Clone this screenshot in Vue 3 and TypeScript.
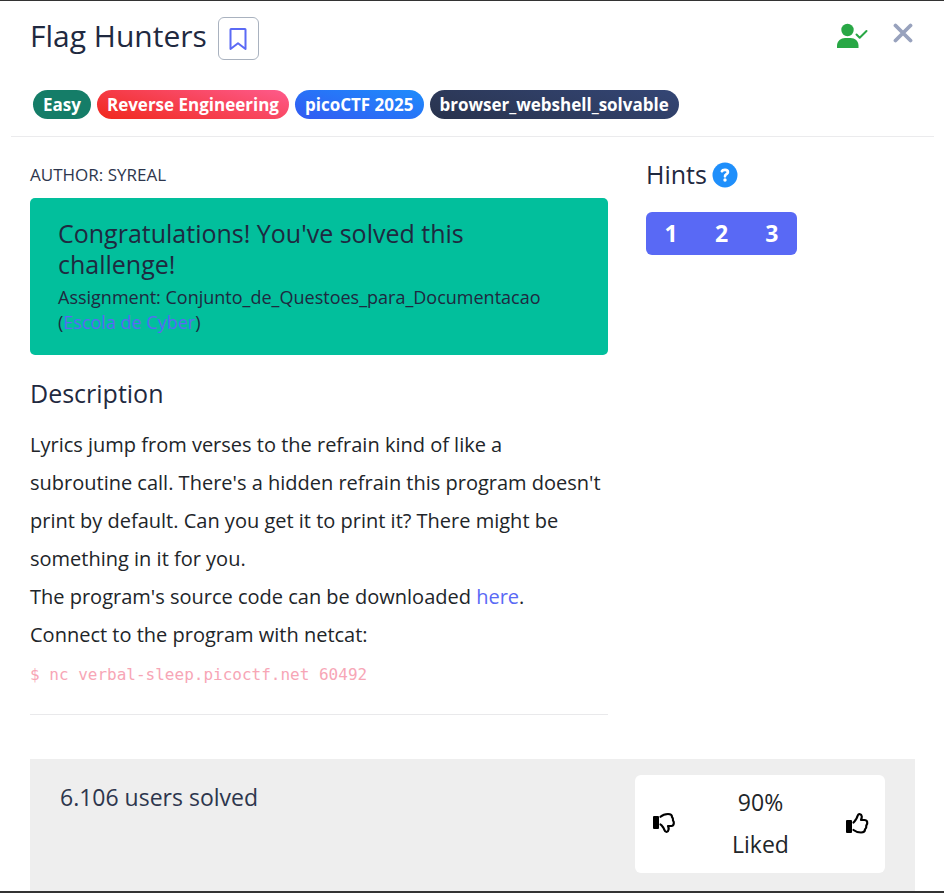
<script setup lang="ts">
import { ref } from 'vue'

interface Tag {
  label: string
  kind: string
}

const tags: Tag[] = [
  { label: 'Easy', kind: 'easy' },
  { label: 'Reverse Engineering', kind: 'category' },
  { label: 'picoCTF 2025', kind: 'event' },
  { label: 'browser_webshell_solvable', kind: 'plain' },
]
const hints: number[] = [1, 2, 3]
const activeHint = ref<number | null>(null)
const bookmarked = ref(false)
</script>

<template>
  <main class="modal">
    <header class="head">
      <div class="title-row">
        <h1>Flag Hunters</h1>
        <button class="bookmark" type="button" aria-label="Bookmark" :aria-pressed="bookmarked" @click="bookmarked = !bookmarked">
          <svg width="18" height="24" viewBox="0 0 18 24" fill="none" stroke="#5b6af5" stroke-width="2" stroke-linejoin="round">
            <path d="M1.500 2.500Q1.500 2 2 2H16Q16.500 2 16.500 2.500V22L9 16.200L1.500 22Z" />
          </svg>
        </button>
        <svg class="solved-icon" width="32" height="26" viewBox="0 0 32 26" fill="#28a745">
          <circle cx="11.500" cy="7" r="6.200" />
          <path d="M1 25V22.500C1 18 5 15 9 15h5.500C19 15 22.500 18 22.500 22.500V25Z" />
          <path d="M20.500 11.500l3.200 3.200l6.800-6.700" fill="none" stroke="#28a745" stroke-width="2" stroke-linecap="round" stroke-linejoin="round" />
        </svg>
        <button class="close" type="button" aria-label="Close">
          <svg width="20" height="20" viewBox="0 0 20 20" stroke="#98a2bd" stroke-width="3.800" stroke-linecap="round">
            <path d="M2.500 2.500L17.500 17.500M17.500 2.500L2.500 17.500" />
          </svg>
        </button>
      </div>
      <div class="tags">
        <span v-for="tag in tags" :key="tag.label" class="tag" :class="tag.kind">{{ tag.label }}</span>
      </div>
    </header>

    <div class="columns">
      <section class="details">
        <p class="author">AUTHOR: SYREAL</p>
        <div class="success">
          <h2>Congratulations! You've solved this challenge!</h2>
          <p>Assignment: Conjunto_de_Questoes_para_Documentacao (<a href="#">Escola de Cyber</a>)</p>
        </div>
        <h2 class="section-title">Description</h2>
        <div class="description">
          <p>Lyrics jump from verses to the refrain kind of like a subroutine call. There's a hidden refrain this program doesn't print by default. Can you get it to print it? There might be something in it for you.</p>
          <p>The program's source code can be downloaded <a href="#">here</a>.</p>
          <p>Connect to the program with netcat:</p>
          <code>$ nc verbal-sleep.picoctf.net 60492</code>
        </div>
      </section>

      <aside class="hints">
        <h2>
          Hints
          <svg width="26" height="26" viewBox="0 0 26 26">
            <circle cx="13" cy="13" r="12.500" fill="#1f8ffb" />
            <path d="M9.900 9.200C10.500 7.600 15.900 7 15.900 10.200C15.900 12.200 13 12.100 13 14.300" fill="none" stroke="#fff" stroke-width="2.700" stroke-linecap="round" />
            <circle cx="13" cy="18" r="1.700" fill="#fff" />
          </svg>
        </h2>
        <div class="hint-group">
          <button v-for="n in hints" :key="n" type="button" :aria-pressed="activeHint === n" @click="activeHint = n">{{ n }}</button>
        </div>
      </aside>
    </div>

    <footer class="stats">
      <p class="solves">6.106 users solved</p>
      <div class="rating">
        <button type="button" aria-label="Dislike">
          <svg width="24" height="22" viewBox="0 0 24 22" fill="none" stroke="#000" stroke-width="2.200" stroke-linejoin="round" stroke-linecap="round">
            <rect x="1" y="4" width="6" height="13" rx="1" fill="#000" stroke="none" />
            <path d="M8.500 4.800C11 2.500 13 2 16 2C19 2 20 3 20 5C21 6 21.300 7 21 8.500C22.500 10 22 14 19.500 14H16C17 16 17 19.500 14.500 20C12.500 20 12.500 17.500 11.500 16C10.500 14.500 9.500 12.800 8.500 12.500" />
          </svg>
        </button>
        <p class="score"><span>90%</span><span>Liked</span></p>
        <button type="button" aria-label="Like">
          <svg width="24" height="22" viewBox="0 0 24 22" fill="none" stroke="#000" stroke-width="2.200" stroke-linejoin="round" stroke-linecap="round">
            <rect x="1" y="8" width="6" height="13" rx="1" fill="#000" stroke="none" />
            <path d="M8.500 10.500C9.500 10 10.500 8 11.500 6.500C12.500 5 12.500 2 14.500 2C17.500 2.500 17 5.500 16 8H19.500C22.500 8 23 11.500 21.300 13.500C21.500 15 21 16.500 20 17.300C20 19.500 18.500 20.500 16 20.500C13 20.500 11 20 8.500 18" />
          </svg>
        </button>
      </div>
    </footer>
  </main>
</template>

<style>
body {
  margin: 0;
  background: #fff;
}
</style>

<style scoped>
* {
  box-sizing: border-box;
}
.modal {
  display: flex;
  flex-direction: column;
  min-height: 100vh;
  border-top: 1px solid #333;
  border-bottom: 2px solid #333;
  font-family: "Open Sans", "Noto Sans", sans-serif;
  color: #212529;
}
h1, h2, p {
  margin: 0;
  font-weight: 400;
}
a {
  color: #5969f5;
  text-decoration: none;
}
button {
  padding: 0;
  border: 0;
  background: none;
  font-family: inherit;
  cursor: pointer;
}
svg {
  display: block;
}
.head {
  margin: 0 10px 0 11px;
  padding: 16px 21px 17px 19px;
  border-bottom: 1px solid #ebebed;
}
.title-row {
  display: flex;
  align-items: flex-start;
}
h1 {
  color: #1f2940;
  font-size: 30px;
  line-height: 38px;
}
.bookmark {
  display: grid;
  place-items: center;
  width: 41px;
  height: 43px;
  margin-left: 11px;
  border: 1px solid #a9b2bf;
  border-radius: 6px;
}
.solved-icon {
  margin: 6px 25px 0 auto;
}
.close {
  margin-top: 6px;
}
.tags {
  display: flex;
  flex-wrap: wrap;
  gap: 6px;
  margin: 30px 3px 0;
}
.tag {
  padding: 0 10px;
  border-radius: 15px;
  color: #fff;
  font-size: 17px;
  font-weight: 700;
  line-height: 29px;
}
.easy {
  background: #157d68;
}
.category {
  background: linear-gradient(15deg, #f0281c, #fe5b8c);
}
.event {
  background: linear-gradient(15deg, #335af2, #1d8cfc);
}
.plain {
  background: linear-gradient(15deg, #29334d, #344675);
}
.columns {
  display: grid;
  grid-template-columns: minmax(0, 578fr) minmax(0, 269fr);
  gap: 38px;
  margin: 0 29px 44px 30px;
}
.details {
  padding: 25px 0 20px;
  border-bottom: 1px solid #e9e9eb;
}
.author {
  color: #2d364d;
  font-size: 17px;
  line-height: 26px;
}
.success {
  margin-top: 10px;
  padding: 20px 28px;
  border-radius: 5px;
  background: #02bf9c;
  color: #1f2940;
}
h2 {
  color: #1f2940;
  font-size: 25px;
  line-height: 31px;
}
.success p {
  margin-top: 5px;
  font-size: 18px;
  line-height: 25px;
}
.section-title {
  margin-top: 23px;
}
.description {
  margin-top: 17px;
  font-size: 20px;
  line-height: 38px;
}
code {
  display: block;
  padding-top: 2px;
  color: #f7a6b6;
  font-family: "DejaVu Sans Mono", "Liberation Mono", monospace;
  font-size: 16px;
}
.hints {
  padding-top: 22px;
}
.hints h2 {
  display: flex;
  align-items: center;
  gap: 5px;
}
.hint-group {
  display: grid;
  grid-template-columns: repeat(3, 1fr);
  width: 151px;
  margin-top: 22px;
  overflow: hidden;
  border-radius: 6px;
  background: #5969f5;
}
.hint-group button {
  color: #fff;
  font-size: 23px;
  font-weight: 700;
  line-height: 43px;
}
.stats {
  display: flex;
  flex: 1;
  align-items: flex-start;
  justify-content: space-between;
  margin: 0 29px 0 30px;
  padding: 16px 30px;
  background: #eee;
}
.solves {
  color: #2d364d;
  font-size: 23px;
  line-height: 44px;
}
.rating {
  display: flex;
  align-items: center;
  justify-content: space-between;
  width: 250px;
  padding: 6px 16px 8px 17px;
  border-radius: 6px;
  background: #fff;
}
.score {
  display: flex;
  flex-direction: column;
  align-items: center;
  font-size: 23px;
  line-height: 42px;
}
</style>
